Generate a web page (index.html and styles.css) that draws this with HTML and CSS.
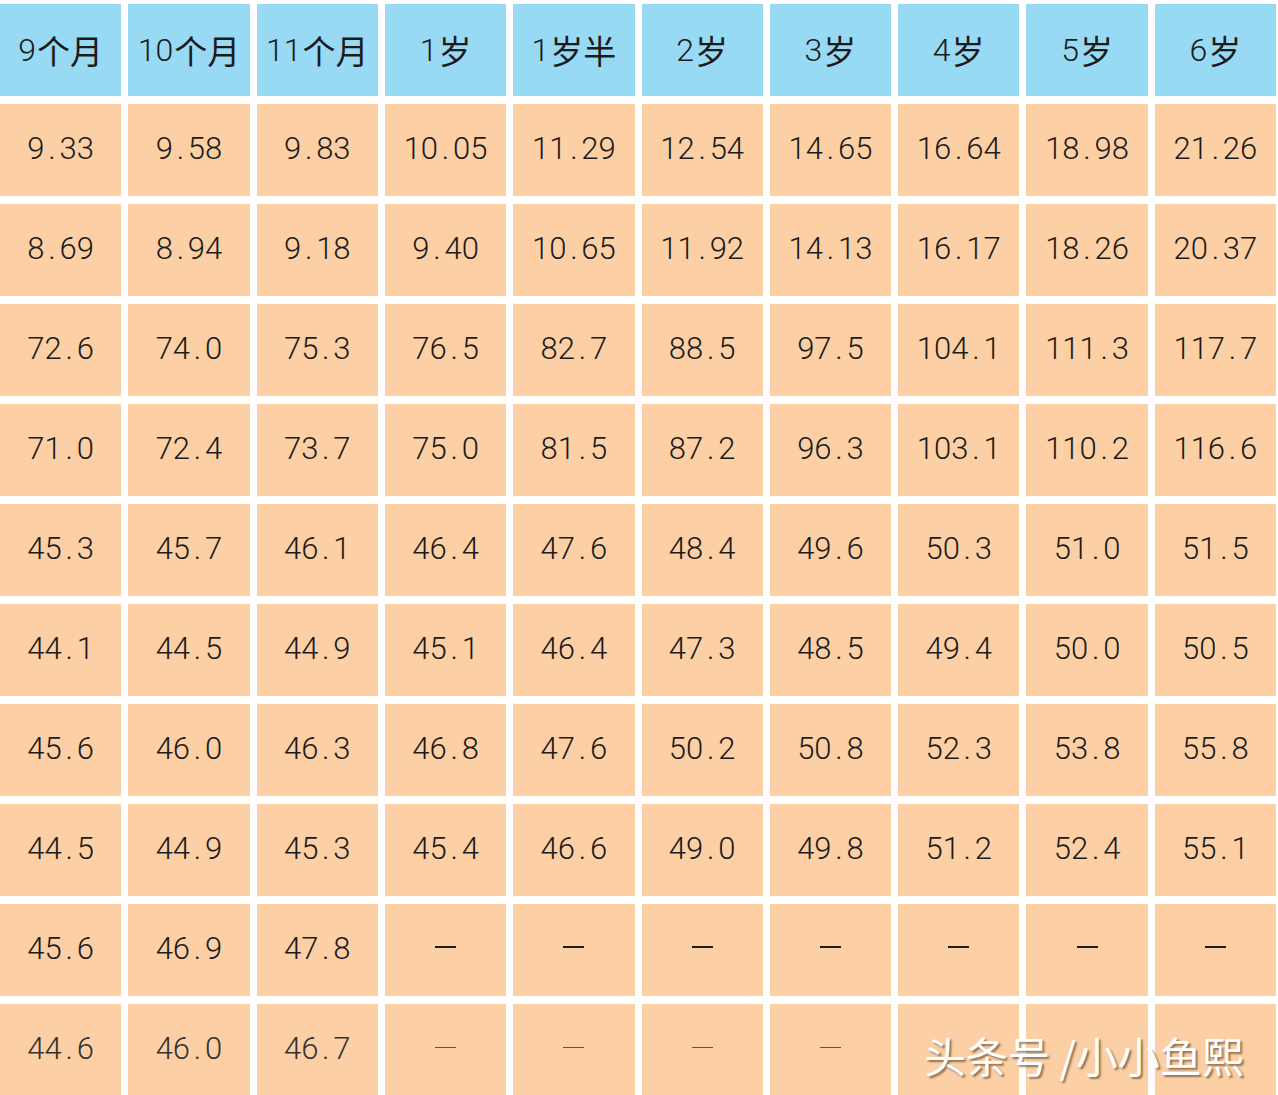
FILE: index.html
```html
<!DOCTYPE html>
<html lang="zh-CN">
<head>
<meta charset="utf-8">
<title>儿童生长标准表</title>
<link rel="stylesheet" href="styles.css">
</head>
<body>
<div class="sheet">
  <div class="grid">
    <div class="cell head">9<span class="cjk">个月</span></div>
    <div class="cell head">10<span class="cjk">个月</span></div>
    <div class="cell head">11<span class="cjk">个月</span></div>
    <div class="cell head">1<span class="cjk">岁</span></div>
    <div class="cell head">1<span class="cjk">岁半</span></div>
    <div class="cell head">2<span class="cjk">岁</span></div>
    <div class="cell head">3<span class="cjk">岁</span></div>
    <div class="cell head">4<span class="cjk">岁</span></div>
    <div class="cell head">5<span class="cjk">岁</span></div>
    <div class="cell head">6<span class="cjk">岁</span></div>

    <div class="cell">9<span class="dot">.</span>33</div>
    <div class="cell">9<span class="dot">.</span>58</div>
    <div class="cell">9<span class="dot">.</span>83</div>
    <div class="cell">10<span class="dot">.</span>05</div>
    <div class="cell">11<span class="dot">.</span>29</div>
    <div class="cell">12<span class="dot">.</span>54</div>
    <div class="cell">14<span class="dot">.</span>65</div>
    <div class="cell">16<span class="dot">.</span>64</div>
    <div class="cell">18<span class="dot">.</span>98</div>
    <div class="cell">21<span class="dot">.</span>26</div>

    <div class="cell">8<span class="dot">.</span>69</div>
    <div class="cell">8<span class="dot">.</span>94</div>
    <div class="cell">9<span class="dot">.</span>18</div>
    <div class="cell">9<span class="dot">.</span>40</div>
    <div class="cell">10<span class="dot">.</span>65</div>
    <div class="cell">11<span class="dot">.</span>92</div>
    <div class="cell">14<span class="dot">.</span>13</div>
    <div class="cell">16<span class="dot">.</span>17</div>
    <div class="cell">18<span class="dot">.</span>26</div>
    <div class="cell">20<span class="dot">.</span>37</div>

    <div class="cell">72<span class="dot">.</span>6</div>
    <div class="cell">74<span class="dot">.</span>0</div>
    <div class="cell">75<span class="dot">.</span>3</div>
    <div class="cell">76<span class="dot">.</span>5</div>
    <div class="cell">82<span class="dot">.</span>7</div>
    <div class="cell">88<span class="dot">.</span>5</div>
    <div class="cell">97<span class="dot">.</span>5</div>
    <div class="cell">104<span class="dot">.</span>1</div>
    <div class="cell">111<span class="dot">.</span>3</div>
    <div class="cell">117<span class="dot">.</span>7</div>

    <div class="cell">71<span class="dot">.</span>0</div>
    <div class="cell">72<span class="dot">.</span>4</div>
    <div class="cell">73<span class="dot">.</span>7</div>
    <div class="cell">75<span class="dot">.</span>0</div>
    <div class="cell">81<span class="dot">.</span>5</div>
    <div class="cell">87<span class="dot">.</span>2</div>
    <div class="cell">96<span class="dot">.</span>3</div>
    <div class="cell">103<span class="dot">.</span>1</div>
    <div class="cell">110<span class="dot">.</span>2</div>
    <div class="cell">116<span class="dot">.</span>6</div>

    <div class="cell">45<span class="dot">.</span>3</div>
    <div class="cell">45<span class="dot">.</span>7</div>
    <div class="cell">46<span class="dot">.</span>1</div>
    <div class="cell">46<span class="dot">.</span>4</div>
    <div class="cell">47<span class="dot">.</span>6</div>
    <div class="cell">48<span class="dot">.</span>4</div>
    <div class="cell">49<span class="dot">.</span>6</div>
    <div class="cell">50<span class="dot">.</span>3</div>
    <div class="cell">51<span class="dot">.</span>0</div>
    <div class="cell">51<span class="dot">.</span>5</div>

    <div class="cell">44<span class="dot">.</span>1</div>
    <div class="cell">44<span class="dot">.</span>5</div>
    <div class="cell">44<span class="dot">.</span>9</div>
    <div class="cell">45<span class="dot">.</span>1</div>
    <div class="cell">46<span class="dot">.</span>4</div>
    <div class="cell">47<span class="dot">.</span>3</div>
    <div class="cell">48<span class="dot">.</span>5</div>
    <div class="cell">49<span class="dot">.</span>4</div>
    <div class="cell">50<span class="dot">.</span>0</div>
    <div class="cell">50<span class="dot">.</span>5</div>

    <div class="cell">45<span class="dot">.</span>6</div>
    <div class="cell">46<span class="dot">.</span>0</div>
    <div class="cell">46<span class="dot">.</span>3</div>
    <div class="cell">46<span class="dot">.</span>8</div>
    <div class="cell">47<span class="dot">.</span>6</div>
    <div class="cell">50<span class="dot">.</span>2</div>
    <div class="cell">50<span class="dot">.</span>8</div>
    <div class="cell">52<span class="dot">.</span>3</div>
    <div class="cell">53<span class="dot">.</span>8</div>
    <div class="cell">55<span class="dot">.</span>8</div>

    <div class="cell">44<span class="dot">.</span>5</div>
    <div class="cell">44<span class="dot">.</span>9</div>
    <div class="cell">45<span class="dot">.</span>3</div>
    <div class="cell">45<span class="dot">.</span>4</div>
    <div class="cell">46<span class="dot">.</span>6</div>
    <div class="cell">49<span class="dot">.</span>0</div>
    <div class="cell">49<span class="dot">.</span>8</div>
    <div class="cell">51<span class="dot">.</span>2</div>
    <div class="cell">52<span class="dot">.</span>4</div>
    <div class="cell">55<span class="dot">.</span>1</div>

    <div class="cell">45<span class="dot">.</span>6</div>
    <div class="cell">46<span class="dot">.</span>9</div>
    <div class="cell">47<span class="dot">.</span>8</div>
    <div class="cell"><span class="dash" aria-label="—"></span></div>
    <div class="cell"><span class="dash" aria-label="—"></span></div>
    <div class="cell"><span class="dash" aria-label="—"></span></div>
    <div class="cell"><span class="dash" aria-label="—"></span></div>
    <div class="cell"><span class="dash" aria-label="—"></span></div>
    <div class="cell"><span class="dash" aria-label="—"></span></div>
    <div class="cell"><span class="dash" aria-label="—"></span></div>

    <div class="cell faint">44<span class="dot">.</span>6</div>
    <div class="cell faint">46<span class="dot">.</span>0</div>
    <div class="cell faint">46<span class="dot">.</span>7</div>
    <div class="cell faint"><span class="dash thin" aria-label="—"></span></div>
    <div class="cell faint"><span class="dash thin" aria-label="—"></span></div>
    <div class="cell faint"><span class="dash thin" aria-label="—"></span></div>
    <div class="cell faint"><span class="dash thin" aria-label="—"></span></div>
    <div class="cell faint"></div>
    <div class="cell faint"></div>
    <div class="cell faint"></div>
  </div>
  <div class="watermark">头条号 /小小鱼熙</div>
</div>
</body>
</html>
```

FILE: styles.css
```css
html, body {
  margin: 0;
  padding: 0;
  background: #ffffff;
}

.sheet {
  position: relative;
  width: 1278px;
  height: 1095px;
  overflow: hidden;
  padding-top: 4px;
  box-sizing: border-box;
}

.grid {
  width: 1276px;
  display: grid;
  grid-template-columns: repeat(10, 1fr);
  grid-auto-rows: 92px;
  column-gap: 7px;
  row-gap: 8px;
}

.cell {
  background: #fccfa4;
  display: flex;
  align-items: center;
  justify-content: center;
  font-family: Roboto, "Liberation Sans", "Noto Sans CJK SC", sans-serif;
  font-weight: 300;
  font-size: 31px;
  color: #1b1b1b;
  line-height: 1;
  padding-bottom: 4px;
  box-sizing: border-box;
}

.head {
  background: #98d9f4;
  font-size: 32px;
  padding-bottom: 0;
}

.cjk {
  font-family: "Noto Sans CJK SC", sans-serif;
  font-weight: 400;
  font-size: 33px;
  margin-left: 1px;
}

.dot {
  display: inline-block;
  width: 15px;
  text-align: center;
}

.dash {
  display: inline-block;
  width: 21px;
  height: 2px;
  background: #1b1b1b;
  margin-bottom: 2px;
}

.dash.thin {
  height: 1px;
  background: #555;
}

.faint {
  color: #333;
}

.watermark {
  position: absolute;
  left: 924px;
  top: 1034px;
  font-family: "Noto Sans CJK SC", sans-serif;
  font-size: 42px;
  line-height: 1;
  color: #ffffff;
  text-shadow: 2px 2px 2px rgba(60, 40, 20, 0.55);
  white-space: nowrap;
}
```
